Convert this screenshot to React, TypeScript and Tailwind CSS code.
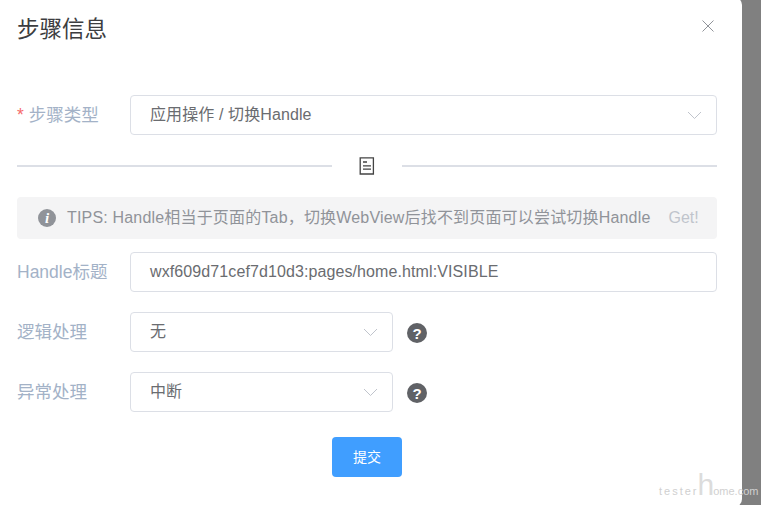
import { ReactNode } from "react";

const Chevron = () => (
  <svg className="h-[9px] w-[15px] text-[#c0c4cc]" viewBox="0 0 15 9" fill="none" stroke="currentColor" strokeWidth="1">
    <path d="M1 1l6.5 6.5L14 1" />
  </svg>
);

const Help = () => (
  <span className="mt-[2px] flex h-5 w-5 items-center justify-center rounded-full bg-[#606266] text-[15px] leading-none font-bold text-white">
    ?
  </span>
);

const Label = ({ children, required }: { children: ReactNode; required?: boolean }) => (
  <label className="w-[113px] shrink-0 whitespace-nowrap text-[17.5px] leading-10 text-[#a3b2c7]">
    {required && <span className="mr-[5px] text-[#f56c6c]">*</span>}
    {children}
  </label>
);

const Select = ({ value, className }: { value: string; className: string }) => (
  <div className={`flex h-10 items-center justify-between rounded-[4px] border border-[#dcdfe6] bg-white pr-[14px] pl-[19px] tracking-[0.1px] text-[#6a6c70] ${className}`}>
    <span>{value}</span>
    <Chevron />
  </div>
);

export default function App() {
  return (
    <div className="h-[505px] overflow-hidden bg-[#808080] font-['Liberation_Sans','Noto_Sans_CJK_SC',sans-serif] text-[16px]">
      <div className="relative -mt-[3px] h-[510px] w-[742px] rounded-r-[8px] bg-white pt-[3px] pr-[25px] pl-[17px]">
        {/* header */}
        <div className="flex h-[52px] items-center justify-between">
          <h2 className="mt-[8px] text-[22.5px] leading-[30px] text-[#3c3d40]">步骤信息</h2>
          <svg className="mr-[3px] h-3 w-3 text-[#909399]" viewBox="0 0 12 12" fill="none" stroke="currentColor" strokeWidth="1">
            <path d="M.5.5l11 11M11.5.5l-11 11" />
          </svg>
        </div>

        <div className="mt-[43px] flex">
          <Label required>步骤类型</Label>
          <Select value="应用操作 / 切换Handle" className="flex-1" />
        </div>

        {/* divider */}
        <div className="mt-[20px] flex h-[22px] items-center gap-[27px]">
          <div className="h-[2px] flex-1 bg-[#dcdfe6]" />
          <svg className="h-[18px] w-[16px] text-[#444]" viewBox="0 0 16 18" fill="none" stroke="currentColor" strokeWidth="1.3">
            <path d="M1.2 .8h13.2v16.2H1.2z" />
            <path d="M4 5h4M4 8.8h8M4 12.2h8" />
          </svg>
          <div className="h-[2px] flex-1 bg-[#dcdfe6]" />
        </div>

        {/* tips */}
        <div className="mt-[20px] flex h-[42px] items-center rounded-[4px] bg-[#f4f4f5] pl-[21px] text-[#909399]">
          <span className="flex h-[18px] w-[18px] shrink-0 items-center justify-center rounded-full bg-[#909399] font-['Liberation_Serif',serif] text-[15px] leading-none font-bold text-white italic">
            i
          </span>
          <span className="ml-[11px] whitespace-nowrap tracking-[0.18px]">TIPS: Handle相当于页面的Tab，切换WebView后找不到页面可以尝试切换Handle</span>
          <span className="ml-[18px] text-[#c0c4cc]">Get!</span>
        </div>

        <div className="mt-[13px] flex">
          <Label>Handle标题</Label>
          <div className="flex h-10 flex-1 items-center rounded-[4px] border border-[#dcdfe6] pl-[19px] tracking-[0.1px] text-[#6a6c70]">
            wxf609d71cef7d10d3:pages/home.html:VISIBLE
          </div>
        </div>

        <div className="mt-5 flex items-center">
          <Label>逻辑处理</Label>
          <Select value="无" className="w-[263px]" />
          <span className="ml-[14px]"><Help /></span>
        </div>

        <div className="mt-5 flex items-center">
          <Label>异常处理</Label>
          <Select value="中断" className="w-[263px]" />
          <span className="ml-[14px]"><Help /></span>
        </div>

        <div className="mt-[25px] flex justify-center">
          <button className="h-10 w-[70px] rounded-[4px] bg-[#409eff] text-[14px] text-white">提交</button>
        </div>

        {/* watermark */}
        <span className="absolute top-[473px] left-[659px] flex items-baseline text-[11px] leading-none whitespace-nowrap text-[#d0d0d0]">
          <span className="tracking-[2px]">tester</span>
          <span className="-mx-[1px] text-[30px] leading-none text-[#dcdcdc]">h</span>
          <span>ome.com</span>
        </span>
      </div>
    </div>
  );
}
